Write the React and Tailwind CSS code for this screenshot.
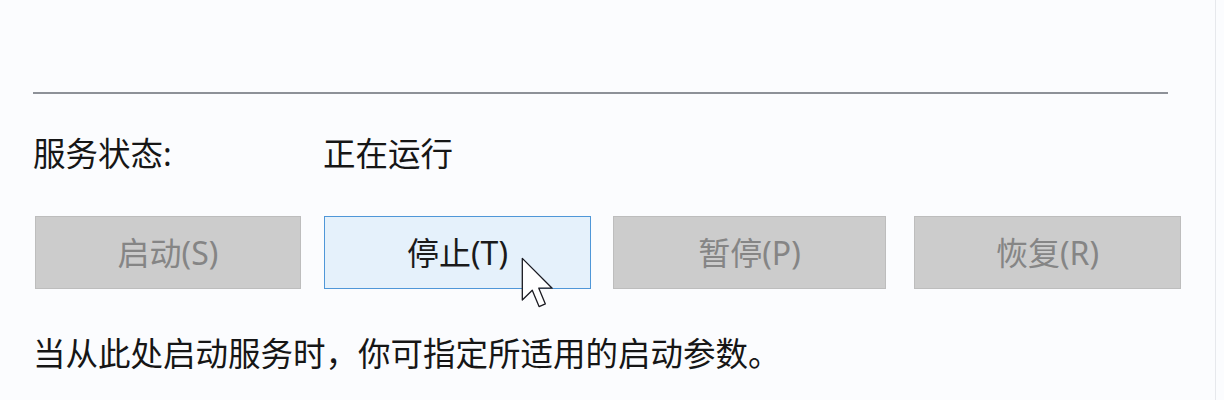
import React from 'react';

const font = { fontFamily: '"Noto Sans", "Noto Sans CJK SC", sans-serif' };

// Windows-style arrow pointer hovering the stop button
const Cursor = () => (
  <svg
    className="absolute left-[521px] top-[257px]"
    width="33"
    height="53"
    viewBox="0 0 12.6 20.2"
  >
    <path
      d="M0.5 0.5 L0.5 16.4 L4.3 12.7 L6.9 18.9 L9.3 17.9 L6.8 11.9 L11.9 11.9 Z"
      fill="#ffffff"
      stroke="#1b1b22"
      strokeWidth="0.5"
      strokeLinejoin="round"
    />
  </svg>
);

const ServiceButton = ({ label, active, className }) => (
  <button
    type="button"
    className={
      active
        ? `h-[73px] border border-[#4f97d8] bg-[#e5f1fb] text-[#1a1a1a] text-[32px] leading-none ${className}`
        : `h-[73px] border border-[#bdbdbd] bg-[#cccccc] text-[#858585] text-[32px] leading-none ${className}`
    }
    style={font}
  >
    {label}
  </button>
);

export default function App() {
  return (
    <div className="relative h-[400px] w-[1224px] overflow-hidden bg-[#fbfcfe]" style={font}>
      <div className="h-full w-[1216px] border-r border-[#e6e8ec] pl-[33px] pt-[92px]">
        {/* separator */}
        <div className="h-[2px] w-[1135px] bg-[#8d9198]" />

        {/* status row */}
        <div className="mt-[39px] flex h-[42px] items-center text-[32.5px] text-[#161616]">
          <span className="w-[290px]">服务状态:</span>
          <span>正在运行</span>
        </div>

        {/* control buttons */}
        <div className="mt-[41px] flex">
          <ServiceButton label="启动(S)" className="ml-[2px] w-[266px]" />
          <ServiceButton label="停止(T)" active className="ml-[23px] w-[267px]" />
          <ServiceButton label="暂停(P)" className="ml-[22px] w-[273px]" />
          <ServiceButton label="恢复(R)" className="ml-[28px] w-[267px]" />
        </div>

        {/* hint */}
        <p className="mt-[44px] h-[42px] leading-[42px] text-[32.5px] text-[#161616]">
          当从此处启动服务时，你可指定所适用的启动参数。
        </p>
      </div>
      <Cursor />
    </div>
  );
}
